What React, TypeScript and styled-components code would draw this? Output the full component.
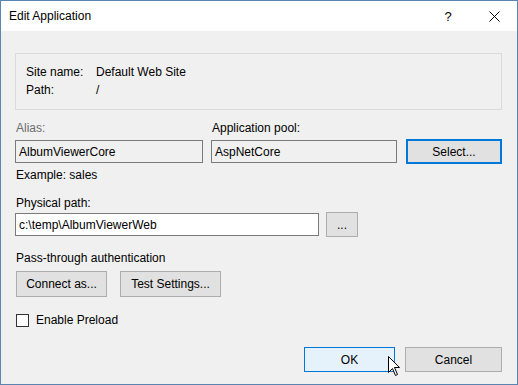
import React from 'react';
import styled, { createGlobalStyle } from 'styled-components';

const Global = createGlobalStyle`
  html, body { margin: 0; padding: 0; background: #f0f0f0; }
  body { font-family: "Liberation Sans", Arial, sans-serif; font-size: 12px; color: #000; }
`;

const Window = styled.div`
  position: relative;
  width: 518px;
  height: 385px;
  box-sizing: border-box;
  border: 1px solid #5b84b1;
  background: #f0f0f0;
  display: flex;
  flex-direction: column;
  overflow: hidden;
`;

const TitleBar = styled.div`
  height: 30px;
  background: #fff;
  display: flex;
  align-items: center;
  padding-left: 8px;
  font-size: 12px;
`;

const TitleText = styled.div`
  flex: 1;
  padding-bottom: 1px;
`;

const TitleButton = styled.div`
  width: 46px;
  height: 30px;
  display: flex;
  align-items: center;
  justify-content: center;
  font-size: 13px;
`;

const Body = styled.div`
  padding: 22px 15px 0 14px;
  display: flex;
  flex-direction: column;
`;

const InfoBox = styled.div`
  box-sizing: border-box;
  border: 1px solid #dadada;
  height: 57px;
  padding: 9px 10px 0;
  display: grid;
  grid-template-columns: 70px 1fr;
  grid-auto-rows: 18px;
  align-items: center;
`;

const Label = styled.div<{ $top?: number; $muted?: boolean }>`
  height: 16px;
  line-height: 16px;
  margin-top: ${(p) => p.$top ?? 0}px;
  color: ${(p) => (p.$muted ? '#6d6d6d' : '#000')};
  padding-left: 1px;
`;

const Row = styled.div<{ $top?: number }>`
  display: flex;
  align-items: center;
  margin-top: ${(p) => p.$top ?? 0}px;
`;

const Field = styled.div<{ $w: number; $bg?: string }>`
  width: ${(p) => p.$w}px;
  height: 23px;
  box-sizing: border-box;
  border: 1px solid #7a7a7a;
  background: ${(p) => p.$bg ?? '#f0f0f0'};
  padding-left: 3px;
  display: flex;
  align-items: center;
`;

const Col = styled.div<{ $w: number; $ml?: number }>`
  display: flex;
  flex-direction: column;
  width: ${(p) => p.$w}px;
  margin-left: ${(p) => p.$ml ?? 0}px;
`;

const Button = styled.div<{ $w: number; $h?: number; $ml?: number; $variant?: 'focus' | 'hover' }>`
  width: ${(p) => p.$w}px;
  height: ${(p) => p.$h ?? 25}px;
  margin-left: ${(p) => p.$ml ?? 0}px;
  box-sizing: border-box;
  display: flex;
  align-items: center;
  justify-content: center;
  background: ${(p) => (p.$variant === 'hover' ? '#e5f1fb' : '#e1e1e1')};
  border: ${(p) =>
    p.$variant === 'focus'
      ? '2px solid #0078d7'
      : p.$variant === 'hover'
      ? '1px solid #0078d7'
      : '1px solid #adadad'};
`;

const Check = styled.div`
  width: 13px;
  height: 13px;
  box-sizing: border-box;
  border: 1px solid #333;
  background: #fff;
  margin: 0 7px 0 1px;
`;

const Footer = styled.div`
  display: flex;
  justify-content: flex-end;
  margin-top: 20px;
`;

const Cursor = styled.svg`
  position: absolute;
  left: 387px;
  top: 355px;
`;

export default function App() {
  return (
    <>
      <Global />
      <Window>
        <TitleBar>
          <TitleText>Edit Application</TitleText>
          <TitleButton>?</TitleButton>
          <TitleButton>
            <svg width="11" height="11" viewBox="0 0 11 11">
              <path d="M0.5 0.5 L10.5 10.5 M10.5 0.5 L0.5 10.5" stroke="#000" strokeWidth="1" />
            </svg>
          </TitleButton>
        </TitleBar>
        <Body>
          <InfoBox>
            <span>Site name:</span>
            <span>Default Web Site</span>
            <span>Path:</span>
            <span>/</span>
          </InfoBox>
          <Row $top={10} style={{ alignItems: 'flex-end' }}>
            <Col $w={188}>
              <Label $muted>Alias:</Label>
              <Field $w={188} style={{ marginTop: 4 }}>AlbumViewerCore</Field>
            </Col>
            <Col $w={186} $ml={8}>
              <Label>Application pool:</Label>
              <Field $w={186} style={{ marginTop: 4 }}>AspNetCore</Field>
            </Col>
            <Button $w={98} $ml={9} $variant="focus" style={{ marginBottom: -1 }}>
              Select...
            </Button>
          </Row>
          <Label $top={4}>Example: sales</Label>
          <Label $top={12}>Physical path:</Label>
          <Row $top={1}>
            <Field $w={304} $bg="#fff">c:\temp\AlbumViewerWeb</Field>
            <Button $w={32} $ml={7}>...</Button>
          </Row>
          <Label $top={13}>Pass-through authentication</Label>
          <Row $top={5}>
            <Button $w={91} $h={26} style={{ marginLeft: 1 }}>Connect as...</Button>
            <Button $w={101} $h={26} $ml={13}>Test Settings...</Button>
          </Row>
          <Row $top={16}>
            <Check />
            <span>Enable Preload</span>
          </Row>
          <Footer>
            <Button $w={91} $variant="hover">OK</Button>
            <Button $w={97} $ml={10}>Cancel</Button>
          </Footer>
        </Body>
        <Cursor width="13" height="21" viewBox="0 0 13 21">
          <path
            d="M0.5 0.5 L0.5 16.5 L4.5 12.5 L7.5 19.5 L9.5 18.5 L6.5 11.5 L11.5 11.5 Z"
            fill="#fff"
            stroke="#000"
            strokeWidth="1"
          />
        </Cursor>
      </Window>
    </>
  );
}
